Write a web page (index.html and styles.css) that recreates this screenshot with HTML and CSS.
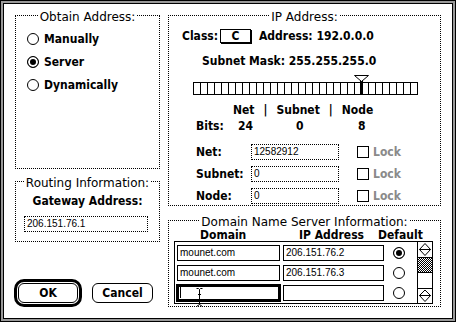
FILE: index.html
```html
<!DOCTYPE html>
<html>
<head>
  <meta charset="UTF-8">
  <title>MacTCP Configuration</title>
  <link rel="stylesheet" href="styles.css">
</head>
<body>
  <div class="window">
    <div class="dialog">

      <!-- Left column -->
      <div class="col left">
        <div class="group obtain">
          <div class="group-title">Obtain Address:</div>
          <div class="radios">
            <div class="radio"><span class="rb"></span>Manually</div>
            <div class="radio"><span class="rb on"></span>Server</div>
            <div class="radio"><span class="rb"></span>Dynamically</div>
          </div>
        </div>

        <div class="group routing">
          <div class="group-title">Routing Information:</div>
          <div class="gw-label">Gateway Address:</div>
          <div class="field dotted gw-field">206.151.76.1</div>
        </div>

        <div class="buttons">
          <div class="default-ring"><div class="btn">OK</div></div>
          <div class="btn cancel">Cancel</div>
        </div>
      </div>

      <!-- Right column -->
      <div class="col right">
        <div class="group ip">
          <div class="group-title">IP Address:</div>
          <div class="class-row">
            <span class="class-label">Class:</span>
            <span class="popup">C</span>
            <span class="addr">Address: 192.0.0.0</span>
          </div>
          <div class="mask">Subnet Mask: 255.255.255.0</div>

          <svg class="slider" width="226" height="22" viewBox="0 0 226 22">
            <defs>
              <pattern id="cells" width="7" height="22" patternUnits="userSpaceOnUse">
                <path d="M0.5 0V22" stroke="#000" stroke-width="1"/>
              </pattern>
            </defs>
            <rect x="0.5" y="8.5" width="224" height="12" fill="url(#cells)" stroke="#000"/>
            <rect x="167" y="6" width="3" height="15" fill="#000"/>
            <polygon points="161.5,1.5 175.5,1.5 168.5,7.5" fill="#fff" stroke="#000"/>
          </svg>

          <div class="parts">
            <span>Net</span><span class="sep">|</span><span>Subnet</span><span class="sep">|</span><span>Node</span>
          </div>
          <div class="bits">
            <span class="bits-label">Bits:</span><span class="n1">24</span><span class="n2">0</span><span>8</span>
          </div>

          <div class="num-rows">
            <div class="num-row">
              <span class="num-label">Net:</span>
              <div class="field dotted num-field">12582912</div>
              <span class="check"></span><span class="lock">Lock</span>
            </div>
            <div class="num-row">
              <span class="num-label">Subnet:</span>
              <div class="field dotted num-field">0</div>
              <span class="check"></span><span class="lock">Lock</span>
            </div>
            <div class="num-row">
              <span class="num-label">Node:</span>
              <div class="field dotted num-field">0</div>
              <span class="check"></span><span class="lock">Lock</span>
            </div>
          </div>
        </div>

        <div class="group dns">
          <div class="group-title">Domain Name Server Information:</div>
          <div class="dns-head">
            <span class="h-domain">Domain</span><span class="h-ip">IP Address</span><span>Default</span>
          </div>
          <div class="list">
            <div class="rows">
              <div class="dns-row">
                <div class="field dom">mounet.com</div>
                <div class="field ipf">206.151.76.2</div>
                <span class="rb on"></span>
              </div>
              <div class="dns-row">
                <div class="field dom">mounet.com</div>
                <div class="field ipf">206.151.76.3</div>
                <span class="rb"></span>
              </div>
              <div class="dns-row">
                <div class="field dom focus">
                  <span class="caret"></span>
                  <svg class="ibeam" width="7" height="19" viewBox="0 0 7 19">
                    <path d="M0.5 0.5H2.5L3.5 1.5L4.5 0.5H6.5M3.5 1.5V16.5M2 6.5H5M0.5 18.5L3.5 16.5L6.5 18.5" fill="none" stroke="#000"/>
                  </svg>
                </div>
                <div class="field ipf"></div>
                <span class="rb"></span>
              </div>
            </div>
            <div class="scroll">
              <div class="arrows">
                <svg width="14" height="15" viewBox="0 0 14 15">
                  <polygon points="7,1.5 12.5,7.5 1.5,7.5" fill="#fff" stroke="#000"/>
                  <polygon points="1.5,7.5 12.5,7.5 7,13.5" fill="#fff" stroke="#000"/>
                </svg>
              </div>
              <div class="track"></div>
              <div class="thumb"></div>
              <div class="arrows down">
                <svg width="14" height="14" viewBox="0 0 14 14">
                  <polygon points="7,1 12.5,6.5 1.5,6.5" fill="#fff" stroke="#000"/>
                  <polygon points="1.5,6.5 12.5,6.5 7,12.5" fill="#fff" stroke="#000"/>
                </svg>
              </div>
            </div>
          </div>
        </div>
      </div>

    </div>
  </div>
</body>
</html>
```

FILE: styles.css
```css
body { margin: 0; font-family: "DejaVu Sans Condensed", "DejaVu Sans", sans-serif; font-weight: bold; font-size: 12px; color: #000; }

.window { width: 456px; height: 322px; box-sizing: border-box; border: 1px solid #000; padding: 2px; background: #999; }
.dialog { height: 100%; box-sizing: border-box; border: 1px solid #000; background: #fff; display: flex; gap: 8px; padding: 11px; }
.col { display: flex; flex-direction: column; }
.left { width: 145px; }
.right { width: 273px; }

.group { border: 1px dotted #000; box-sizing: border-box; }
.group-title { display: table; margin: -5px auto 0; padding: 0 2px; background: #fff; font-family: "DejaVu Sans", sans-serif; font-weight: normal; font-size: 12px; line-height: 13px; }

.field { box-sizing: border-box; height: 16px; border: 1px solid #000; padding: 0 2px; font-family: "Liberation Sans", Arial, sans-serif; font-weight: normal; font-size: 10px; line-height: 14px; white-space: nowrap; }
.field.dotted { border-style: dotted; }

.rb { flex: none; width: 12px; height: 12px; box-sizing: border-box; border: 1px solid #000; border-radius: 50%; background: #fff; }
.rb.on { background: #000; box-shadow: inset 0 0 0 2px #fff; }

/* left column */
.obtain { height: 154px; }
.radios { padding: 3px 0 0 11px; }
.radio { display: flex; align-items: center; gap: 5px; height: 23px; line-height: 14px; }

.routing { height: 61px; margin-top: 12px; }
.gw-label { margin-top: 4px; text-align: center; line-height: 14px; }
.gw-field { width: 124px; margin: 8px 0 0 8px; }

.buttons { margin-top: auto; margin-left: -1px; display: flex; align-items: center; gap: 10px; }
.default-ring { border: 3px solid #000; border-radius: 10px; padding: 1px; }
.btn { box-sizing: border-box; width: 60px; height: 20px; border: 1px solid #000; border-radius: 6px; text-align: center; line-height: 18px; }
.btn.cancel { width: 61px; }

/* IP address */
.ip { height: 194px; }
.class-row { display: flex; align-items: center; height: 14px; margin-top: 5px; padding-left: 13px; line-height: 14px; }
.class-label { width: 38px; }
.popup { box-sizing: border-box; width: 31px; height: 14px; border: 1px solid #000; box-shadow: 1px 1px 0 #000; text-align: center; line-height: 12px; }
.addr { margin-left: 8px; }
.mask { margin-top: 11px; padding-left: 33px; line-height: 14px; }
.slider { display: block; margin: 6px 0 0 24px; }
.parts { display: flex; margin-top: 7px; padding-left: 64px; line-height: 14px; }
.sep { margin: 0 9px; }
.bits { display: flex; margin-top: 2px; padding-left: 27px; line-height: 14px; }
.bits-label { width: 42px; }
.n1 { width: 58px; }
.n2 { width: 62px; }

.num-rows { display: flex; flex-direction: column; gap: 6px; margin-top: 11px; padding-left: 27px; }
.num-row { display: flex; align-items: center; height: 16px; line-height: 14px; }
.num-label { width: 55px; }
.num-field { width: 88px; }
.check { width: 12px; height: 12px; box-sizing: border-box; border: 1px solid #000; margin-left: 18px; }
.lock { margin-left: 4px; color: #8a8a8a; }

/* DNS */
.dns { height: 89px; margin-top: 14px; }
.dns-head { display: flex; padding-left: 31px; line-height: 12px; }
.h-domain { width: 99px; }
.h-ip { width: 79px; }

.list { display: flex; box-sizing: border-box; width: 259px; height: 63px; margin-left: 5px; border: 1px solid #000; }
.rows { flex: 1; display: flex; flex-direction: column; gap: 4px; padding: 3px 0 0 2px; }
.dns-row { display: flex; align-items: center; height: 16px; }
.dom { width: 103px; }
.ipf { width: 101px; margin-left: 3px; }
.dns-row .rb { margin-left: 9px; }
.focus { position: relative; border-width: 2px; box-shadow: 0 0 0 1px #000; padding: 0 1px; }
.caret { display: inline-block; width: 1px; height: 11px; margin-top: 0; background: #000; vertical-align: top; }
.ibeam { position: absolute; left: 17px; top: 1px; }

.scroll { display: flex; flex-direction: column; box-sizing: border-box; width: 15px; border-left: 1px solid #000; }
.arrows { height: 16px; box-sizing: border-box; border-bottom: 1px solid #000; }
.arrows svg { display: block; }
.arrows.down { height: 14px; border-bottom: 0; }
.track { flex: 1; background: repeating-conic-gradient(#000 0 25%, #fff 0 50%) 0 0 / 2px 2px; }
.thumb { height: 17px; box-sizing: border-box; border-top: 1px solid #000; border-bottom: 1px solid #000; background: #fff; }
```
